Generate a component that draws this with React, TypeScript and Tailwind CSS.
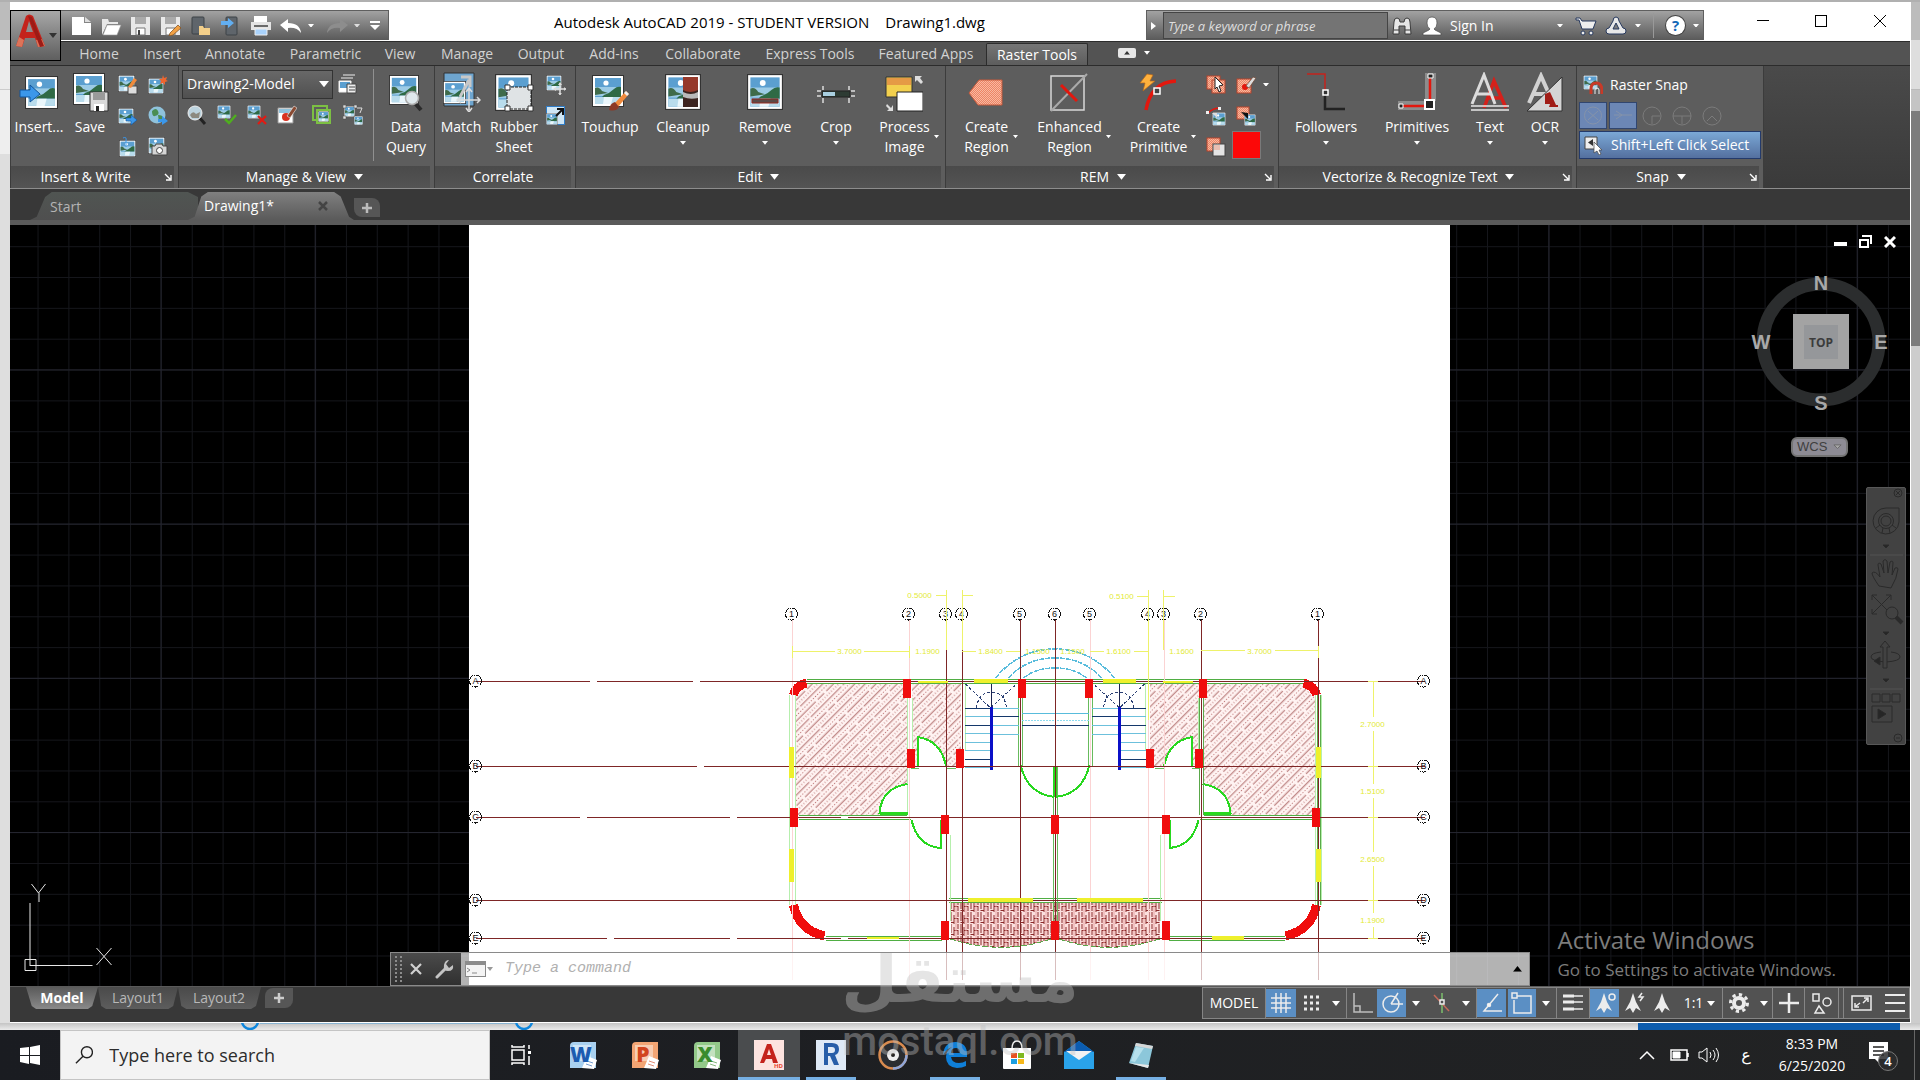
import type { ReactNode } from 'react'

/* ---------- shared bits ---------- */

function Caret({ className = 'w-2 fill-white' }: { className?: string }) {
  return (
    <svg viewBox="0 0 8 5" className={`shrink-0 ${className}`}>
      <path d="M0 0h8L4 5z" />
    </svg>
  )
}

function Photo({ x = 0, y = 0, s = 32 }: { x?: number; y?: number; s?: number }) {
  return (
    <g transform={`translate(${x} ${y}) scale(${s / 32})`}>
      <rect x="0.5" y="0.5" width="31" height="31" fill="#fff" stroke="#333" />
      <rect x="3" y="3" width="26" height="26" fill="#5b9fd0" />
      <path d="M3 12h26v9H3z" fill="#9ccbe6" />
      <path d="M3 13q4-2 7 3l6 2-13 2z" fill="#3f6b4a" />
      <path d="M12 20q6-2 10-6 3-3 7-2v10H10z" fill="#2f6a45" />
      <path d="M3 22h26v7H3z" fill="#b9dcec" />
      <path d="M12 22h9l-2 7h-8z" fill="#eaf6fb" />
      <circle cx="14" cy="8" r="2.6" fill="#fff" />
    </g>
  )
}

function Big({ children }: { children: ReactNode }) {
  return (
    <svg viewBox="0 0 40 40" className="size-10">
      {children}
    </svg>
  )
}

function Small({ children }: { children: ReactNode }) {
  return (
    <svg viewBox="0 0 20 20" className="size-5">
      {children}
    </svg>
  )
}

type ToolProps = {
  icon: ReactNode
  lines: string[]
  width: string
  menu?: boolean
}

function Tool({ icon, lines, width, menu }: ToolProps) {
  const side = menu && lines.length > 1
  return (
    <button className={`flex shrink-0 flex-col items-center pt-[3px] ${width}`}>
      {icon}
      <span className="mt-[5px] flex items-center justify-center gap-1 text-sm leading-5">
        {side && <span className="w-2" />}
        <span>
          {lines.map((line) => (
            <span key={line} className="block whitespace-nowrap">
              {line}
            </span>
          ))}
        </span>
        {side && <Caret className="w-[5px] fill-white" />}
      </span>
      {menu && !side && <Caret className="mt-1 w-[6px] fill-white" />}
    </button>
  )
}

function IconButton({ label, children, width = 'w-[30px]' }: { label: string; children: ReactNode; width?: string }) {
  return (
    <button aria-label={label} className={`flex h-[31px] shrink-0 items-center justify-center ${width}`}>
      {children}
    </button>
  )
}

type PanelProps = {
  title: string
  width: string
  menu?: boolean
  launcher?: boolean
  children: ReactNode
}

function Panel({ title, width, menu, launcher, children }: PanelProps) {
  return (
    <section className={`flex shrink-0 flex-col border-r border-[#3c3c3c] bg-[#5d5d5d] ${width}`}>
      <div className="flex flex-1 items-start pt-[3px]">{children}</div>
      <div className="mr-1 flex h-[22px] items-center bg-linear-to-b from-[#4a4a4a] to-[#545454]">
        <h2 className="flex flex-1 items-center justify-center gap-2 text-sm leading-5">
          {title}
          {menu && <Caret className="w-[9px] fill-white" />}
        </h2>
        {launcher && (
          <button aria-label={`${title} settings`} className="w-[14px]">
            <svg viewBox="0 0 8 8" className="ml-1 size-2 fill-none stroke-white" strokeWidth="1.4">
              <path d="M1 1l5 5M7 2v5H2" />
            </svg>
          </button>
        )}
      </div>
    </section>
  )
}

/* ---------- title bar ---------- */

const menus = [
  { name: 'Home', width: 'w-[64px]' },
  { name: 'Insert', width: 'w-[62px]' },
  { name: 'Annotate', width: 'w-[84px]' },
  { name: 'Parametric', width: 'w-[97px]' },
  { name: 'View', width: 'w-[52px]' },
  { name: 'Manage', width: 'w-[82px]' },
  { name: 'Output', width: 'w-[66px]' },
  { name: 'Add-ins', width: 'w-[80px]' },
  { name: 'Collaborate', width: 'w-[98px]' },
  { name: 'Express Tools', width: 'w-[116px]' },
  { name: 'Featured Apps', width: 'w-[116px]' },
]

function QuickAccess() {
  return (
    <div className="flex h-[30px] w-[328px] shrink-0 items-center border-t border-r border-[#5f5f5f] bg-linear-to-b from-[#a2a2a2] to-[#5a5a5a] pl-[9px]">
      <button aria-label="New" className="w-[30px]">
        <svg viewBox="0 0 22 20" className="h-5 fill-white">
          <path d="M2 1h12v6h7v12H2z" />
          <path d="M15 1l6 5h-6z" fill="#ddd" />
        </svg>
      </button>
      <button aria-label="Open" className="w-[30px]">
        <svg viewBox="0 0 22 20" className="h-5 fill-[#e8e8e8]">
          <path d="M2 19V3h6l1 3h9v2H7z" />
          <path d="M7 9h14l-4 10H3z" fill="#fff" stroke="#999" strokeWidth="0.6" />
        </svg>
      </button>
      <button aria-label="Save" className="w-[30px]">
        <svg viewBox="0 0 22 20" className="h-5">
          <path d="M1 1h19v18H1z" fill="#e9e9e9" />
          <path d="M5 1h11v7H5z" fill="#aaa" />
          <path d="M6 12h9v7H6z" fill="#fff" stroke="#777" />
          <path d="M8 14h2v5H8z" fill="#444" />
        </svg>
      </button>
      <button aria-label="Save as" className="w-[30px]">
        <svg viewBox="0 0 22 20" className="h-5">
          <path d="M1 1h19v18H1z" fill="#e9e9e9" />
          <path d="M5 1h11v7H5z" fill="#aaa" />
          <path d="M6 12h9v7H6z" fill="#fff" stroke="#777" />
          <path d="M10 17l8-8 3 3-8 7-4 1z" fill="#f0a044" stroke="#7a4a1c" strokeWidth="0.7" />
        </svg>
      </button>
      <button aria-label="Open from mobile" className="w-[30px]">
        <svg viewBox="0 0 22 20" className="h-5">
          <rect x="2" y="1" width="12" height="17" rx="1" fill="#5f656b" stroke="#3d4247" />
          <path d="M9 19v-9h4l1 2h6v7z" fill="#f3cf8a" />
        </svg>
      </button>
      <button aria-label="Save to mobile" className="w-[30px]">
        <svg viewBox="0 0 22 20" className="h-5">
          <rect x="6" y="1" width="11" height="18" rx="1" fill="#5f656b" stroke="#3d4247" />
          <path d="M1 5h7V2l6 5-6 5V9H1z" fill="#62aef0" />
        </svg>
      </button>
      <button aria-label="Plot" className="w-[30px]">
        <svg viewBox="0 0 22 20" className="h-5">
          <path d="M4 0h13v6H4z" fill="#fff" />
          <path d="M1 6h20v8H1z" fill="#e4e4e4" />
          <path d="M4 9h14v2H4z" fill="#6a6a6a" />
          <path d="M5 13h12v6H5z" fill="#a9d2fb" stroke="#eee" />
        </svg>
      </button>
      <button aria-label="Undo" className="w-[28px]">
        <svg viewBox="0 0 22 16" className="h-4 fill-white">
          <path d="M0 7l8-6v4q12 0 13 10-4-6-13-5v4z" />
        </svg>
      </button>
      <button aria-label="Undo list" className="w-[18px]">
        <Caret className="w-[6px] fill-white" />
      </button>
      <button aria-label="Redo" className="w-[28px]">
        <svg viewBox="0 0 22 16" className="h-4 fill-[#8d8d8d]">
          <path d="M22 7l-8-6v4Q2 5 1 15q4-6 13-5v4z" />
        </svg>
      </button>
      <button aria-label="Redo list" className="w-[16px]">
        <Caret className="w-[6px] fill-[#ddd]" />
      </button>
      <button aria-label="Customize">
        <svg viewBox="0 0 10 10" className="w-[10px] fill-white">
          <path d="M0 0h10v2H0zM0 4h10l-5 5z" />
        </svg>
      </button>
    </div>
  )
}

function TitleBar() {
  return (
    <header className="relative flex h-[39px] shrink-0 items-start bg-white pt-2">
      <button
        aria-label="Application menu"
        className="z-10 flex h-[51px] w-[51px] shrink-0 items-center border border-black bg-linear-to-b from-[#a8a8a8] to-[#5f5f5f] pl-1"
      >
        <svg viewBox="0 0 44 46" className="w-11">
          <path d="M1 33L11 3q3-3 7 0l12 30-7 1-3-9H10l-3 9z" fill="#c4231c" />
          <path d="M11 19h7l-4-11z" fill="#8f8f8f" />
          <path d="M1 33l3-9 5 3-2 7zM23 34l-2-7 6-1 3 7z" fill="#dd7358" />
          <path d="M13 3l4 1 12 29-4 1z" fill="#9c1b16" />
          <path d="M34 20h8l-4 5z" fill="#333" />
        </svg>
      </button>
      <QuickAccess />
      <p className="ml-[165px] flex gap-4 text-[15px] leading-6 whitespace-pre text-black">
        <span>Autodesk AutoCAD 2019 - STUDENT VERSION</span>
        <span>Drawing1.dwg</span>
      </p>
      <div className="ml-auto flex h-[30px] w-[558px] shrink-0 items-center border border-b-0 border-[#5f5f5f] bg-linear-to-b from-[#a2a2a2] to-[#5a5a5a] text-sm">
        <button aria-label="Collapse search" className="w-4 pl-1">
          <svg viewBox="0 0 5 8" className="h-2 fill-white">
            <path d="M0 0l5 4-5 4z" />
          </svg>
        </button>
        <input
          aria-label="Search help"
          placeholder="Type a keyword or phrase"
          className="h-[27px] w-[225px] border border-[#444] bg-[#747474] px-1 text-[13px] italic placeholder:text-[#dedede]"
        />
        <button aria-label="Search" className="ml-1 w-[30px]">
          <svg viewBox="0 0 20 20" className="size-5 fill-[#e6e6e6] stroke-[#3b3b3b]">
            <path d="M2 6q0-4 3-4t3 4h4q0-4 3-4t3 4l1 12h-6V10H7v8H1z" />
            <path d="M2 14h5M13 14h5" />
          </svg>
        </button>
        <button className="flex items-center gap-2">
          <svg viewBox="0 0 20 20" className="size-5 fill-white stroke-[#4a4a4a]" strokeWidth="0.7">
            <path d="M10 1q5 0 5 6 0 4-3 6l1 1 6 3v2H1v-2l6-3 1-1q-3-2-3-6 0-6 5-6z" />
          </svg>
          <span className="text-white">Sign In</span>
        </button>
        <Caret className="ml-auto w-[6px] fill-white" />
        <button aria-label="Store" className="ml-3">
          <svg viewBox="0 0 22 20" className="h-5 fill-[#eee] stroke-[#27395e]">
            <path d="M1 2h4l2 3h14l-3 8H7L4 4H1z" />
            <circle cx="8" cy="17" r="2" />
            <circle cx="16" cy="17" r="2" />
          </svg>
        </button>
        <button aria-label="Apps" className="ml-2 flex items-center gap-2">
          <svg viewBox="0 0 22 20" className="h-5 fill-[#e8e8e8] stroke-[#27395e]">
            <path d="M11 1q3 0 3 4l4 7q3 0 3 3t-3 3H4q-3 0-3-3t3-3l4-7q0-4 3-4z" />
            <path d="M11 7l3 6H8z" fill="#7c7c7c" />
          </svg>
          <Caret className="w-[6px] fill-white" />
        </button>
        <span className="mx-3 h-[25px] w-px bg-[#999]" />
        <button aria-label="Help" className="flex items-center gap-2 pr-1">
          <span className="flex size-[19px] items-center justify-center rounded-full bg-white text-[15px] font-bold text-[#1467b8] ring-1 ring-[#444]">
            ?
          </span>
          <Caret className="w-[6px] fill-white" />
        </button>
      </div>
      <div className="flex h-[22px] w-[206px] shrink-0 items-center pl-[53px]">
        <button aria-label="Minimize" className="w-[58px]">
          <svg viewBox="0 0 12 12" className="size-3 stroke-black">
            <path d="M0 5.5h12" />
          </svg>
        </button>
        <button aria-label="Maximize" className="w-[59px]">
          <svg viewBox="0 0 12 12" className="size-3 fill-none stroke-black">
            <rect x="0.5" y="0.5" width="11" height="11" />
          </svg>
        </button>
        <button aria-label="Close">
          <svg viewBox="0 0 12 12" className="size-3 stroke-black">
            <path d="M0 0l12 12M12 0L0 12" />
          </svg>
        </button>
      </div>
    </header>
  )
}

function MenuTabs() {
  return (
    <nav className="flex h-[25px] shrink-0 items-end border-t border-b border-[#2c2c2c] bg-[#535353] pl-[57px] text-sm text-[#d2d2d2]">
      {menus.map((menu) => (
        <a key={menu.name} href="#" className={`shrink-0 text-center leading-[22px] whitespace-nowrap ${menu.width}`}>
          {menu.name}
        </a>
      ))}
      <a
        href="#"
        className="ml-[2px] h-[22px] w-[102px] shrink-0 rounded-t-xs border border-b-0 border-[#2c2c2c] bg-linear-to-b from-[#757575] to-[#5d5d5d] text-center leading-[21px] text-white"
      >
        Raster Tools
      </a>
      <button aria-label="Minimize ribbon" className="mb-[7px] ml-[30px] flex h-[10px] w-[18px] items-center justify-center rounded-xs bg-[#e6e6e6]">
        <Caret className="w-[6px] rotate-180 fill-[#333]" />
      </button>
      <button aria-label="Ribbon options" className="mb-[10px] ml-2">
        <Caret className="w-[6px] fill-white" />
      </button>
    </nav>
  )
}

/* ---------- ribbon ---------- */

function RegionPatch({ x = 0, y = 0, s = 13 }: { x?: number; y?: number; s?: number }) {
  return <rect x={x} y={y} width={s} height={s} fill="url(#rose)" stroke="#b7452c" />
}

function Ribbon() {
  return (
    <div className="flex h-[123px] shrink-0 border-b border-[#8d8d8d] bg-linear-to-b from-[#4a4a4a] to-[#3a3a3a] pl-px text-white">
      <svg className="absolute size-0">
        <defs>
          <pattern id="rose" width="2" height="2" patternUnits="userSpaceOnUse">
            <path d="M0 0h2v2H0z" fill="#f7b9a2" />
            <path d="M0 0h1v1H0zM1 1h1v1H1z" fill="#ee8464" />
          </pattern>
        </defs>
      </svg>

      <Panel title="Insert & Write" width="w-[168px]" launcher>
        <Tool
          width="w-[56px]"
          lines={['Insert...']}
          icon={
            <Big>
              <Photo x={6} y={4} s={33} />
              <path d="M1 18h10v-5l10 9-10 8v-5H1z" fill="#3b97ea" stroke="#12549a" />
            </Big>
          }
        />
        <Tool
          width="w-[46px]"
          lines={['Save']}
          icon={
            <Big>
              <Photo x={3} y={1} s={32} />
              <path d="M20 20h18v19H20z" fill="#d9d9d9" stroke="#333" />
              <path d="M23 20h12v8H23z" fill="#9a9a9a" />
              <path d="M24 32h10v7H24z" fill="#fff" />
              <path d="M26 34h3v5h-3z" fill="#222" />
            </Big>
          }
        />
        <div className="flex">
          <div>
            <IconButton label="Save as image">
              <Small>
                <Photo s={17} />
                <path d="M10 11h9v8h-9z" fill="#ddd" stroke="#444" />
                <path d="M10 12l6-9 3 2-6 8z" fill="#f08a3c" />
              </Small>
            </IconButton>
            <IconButton label="Export image">
              <Small>
                <Photo y={2} s={16} />
                <path d="M8 12h5V9l6 5-6 5v-4H8z" fill="#3b97ea" stroke="#12549a" strokeWidth="0.6" />
              </Small>
            </IconButton>
            <IconButton label="Attach">
              <Small>
                <Photo x={1} y={3} s={17} />
                <path d="M5 1q4-2 3 3v6" fill="none" stroke="#3b97ea" />
              </Small>
            </IconButton>
          </div>
          <div>
            <IconButton label="New image">
              <Small>
                <Photo y={3} s={16} />
                <path d="M15 0l1 3 3-1-1 3 2 1-3 1 0 3-2-2-3 1 1-3-2-2 3 0z" fill="#f0662e" />
              </Small>
            </IconButton>
            <IconButton label="Web image">
              <Small>
                <circle cx="9" cy="9" r="8.5" fill="#8fc2dc" />
                <path d="M4 5q4-4 6 0t-3 5q-3 1-3-5zM10 9q5 0 5 3t-4 4z" fill="#4a8d53" />
                <path d="M10 13h4v-3l6 5-6 4v-3h-4z" fill="#3b97ea" />
              </Small>
            </IconButton>
            <IconButton label="Capture image">
              <Small>
                <Photo s={17} />
                <path d="M4 9h3l1-2h6l1 2h4v9H4z" fill="#d5d5d5" stroke="#444" />
                <circle cx="11.5" cy="13.5" r="3" fill="#fff" stroke="#444" />
              </Small>
            </IconButton>
          </div>
        </div>
      </Panel>

      <Panel title="Manage & View" width="w-[256px]" menu>
        <div className="ml-[3px]">
          <div className="flex h-[30px] items-center">
            <div className="relative h-[29px] w-[151px]">
              <select
                aria-label="Raster image"
                className="h-full w-full appearance-none border border-[#333] bg-linear-to-b from-[#686868] to-[#505050] px-1 text-sm"
              >
                <option>Drawing2-Model</option>
              </select>
              <span className="pointer-events-none absolute inset-y-0 right-1 flex items-center">
                <Caret className="w-[10px] fill-white" />
              </span>
            </div>
            <IconButton label="Image manager">
              <Small>
                <path d="M5 1h12M3 4h12M1 7h12v11H1z" fill="#fff" stroke="#eee" />
                <path d="M2 8h10v6H2z" fill="#5b9fd0" />
                <path d="M9 10h9v9H9z" fill="#eee" stroke="#444" />
                <path d="M11 13h6M11 16h6" stroke="#444" />
              </Small>
            </IconButton>
          </div>
          <div className="flex">
            <IconButton label="Zoom image">
              <Small>
                <path d="M12 12l6 7" stroke="#222" strokeWidth="3" />
                <circle cx="8" cy="8" r="7" fill="#bcd3de" stroke="#eee" />
                <path d="M3 10q3-5 6-1l4-2-1 6H5z" fill="#8c8a80" />
              </Small>
            </IconButton>
            <IconButton label="Show image">
              <Small>
                <Photo s={14} />
                <path d="M8 14l4 4 7-8" fill="none" stroke="#4fae1f" strokeWidth="2.5" />
              </Small>
            </IconButton>
            <IconButton label="Remove image">
              <Small>
                <Photo s={14} />
                <path d="M11 11l8 8M19 11l-8 8" stroke="#e21a12" strokeWidth="2.2" />
              </Small>
            </IconButton>
            <IconButton label="Image colour">
              <Small>
                <path d="M1 3h15v15H1z" fill="#fff" stroke="#999" />
                <path d="M2 4h13v4H2z" fill="#8fc2dc" />
                <circle cx="9" cy="12" r="4" fill="#d93221" />
                <path d="M10 11l7-10 3 2-7 10z" fill="#8a4a32" stroke="#eee" strokeWidth="0.6" />
              </Small>
            </IconButton>
            <IconButton label="Image frame" width="w-[40px]">
              <Small>
                <path d="M1 1h14v14H1z" fill="none" stroke="#7cc043" strokeWidth="2" />
                <path d="M4 4h15v15H4z" fill="#7cc043" />
                <Photo x={6} y={6} s={11} />
              </Small>
            </IconButton>
            <IconButton label="Transform" width="w-[22px]">
              <Small>
                <Photo x={1} y={1} s={11} />
                <path d="M0 0h3v3H0zM11 0h3v3h-3zM0 11h3v3H0zM11 11h3v3h-3z" fill="#ddd" stroke="#444" strokeWidth="0.5" />
                <Photo x={11} y={11} s={9} />
                <path d="M14 3l5 0-2 5" fill="none" stroke="#ddd" />
              </Small>
            </IconButton>
          </div>
        </div>
        <span className="ml-[9px] h-[92px] w-px bg-[#909090]" />
        <Tool
          width="ml-1 w-[56px]"
          lines={['Data', 'Query']}
          icon={
            <Big>
              <Photo x={3} y={3} s={30} />
              <path d="M28 30l7 8" stroke="#2a2a2a" strokeWidth="4" />
              <circle cx="26" cy="26" r="6.5" fill="#dfe8ec" stroke="#aaa" strokeWidth="1.5" />
            </Big>
          }
        />
      </Panel>

      <Panel title="Correlate" width="w-[141px]">
        <Tool
          width="w-[52px]"
          lines={['Match']}
          icon={
            <Big>
              <path d="M3 1h30v33H3z" fill="#6ea5cf" stroke="#333" />
              <Photo x={2} y={9} s={23} />
              <path d="M19 25L28 8m-8-3h9v10" fill="none" stroke="#c8c8c8" strokeWidth="3" />
              <path d="M28 17v21M18 28h20M25 20l3-4 3 4M25 36l3 4 3-4M20 25l-4 3 4 3M36 25l3 3-3 3" fill="none" stroke="#ddd" strokeWidth="1.5" />
            </Big>
          }
        />
        <Tool
          width="w-[54px]"
          lines={['Rubber', 'Sheet']}
          icon={
            <Big>
              <Photo x={1} y={2} s={37} />
              <path d="M13 15h24v22H13z" fill="#dfe3e5" stroke="#222" strokeDasharray="3 1" />
              <path d="M11 13h5v5h-5zM34 13h5v5h-5zM11 34h5v5h-5zM34 34h5v5h-5z" fill="#fff" stroke="#333" />
            </Big>
          }
        />
        <div>
          <IconButton label="Displace">
            <Small>
              <Photo s={16} />
              <path d="M14 8v12M8 14h12" stroke="#ddd" strokeWidth="1.5" />
              <path d="M12 10l2-3 2 3M12 18l2 2 2-2M10 12l-3 2 3 2M18 12l2 2-2 2" fill="#ddd" />
            </Small>
          </IconButton>
          <IconButton label="Scale">
            <Small>
              <rect x="0.5" y="0.5" width="18" height="18" fill="#cfe6f5" stroke="#2f7cc7" />
              <Photo x={0} y={7} s={12} />
              <path d="M10 10l6-6m-5-1h6v6" fill="none" stroke="#111" strokeWidth="2" />
            </Small>
          </IconButton>
        </div>
      </Panel>

      <Panel title="Edit" width="w-[370px]" menu>
        <Tool
          width="w-[68px]"
          lines={['Touchup']}
          icon={
            <Big>
              <Photo x={2} y={3} s={32} />
              <path d="M24 32l12-13 3 3-11 13z" fill="#f08a3c" />
              <path d="M34 21l2-2 3 3-2 2z" fill="#eee" />
              <path d="M19 38q1-7 6-8l4 5q-3 5-10 3z" fill="#8c3a26" />
            </Big>
          }
        />
        <Tool
          width="w-[78px]"
          lines={['Cleanup']}
          menu
          icon={
            <Big>
              <Photo x={2} y={2} s={36} />
              <path d="M20 5h15v30H20z" fill="#3c2420" />
              <path d="M20 5h15v13q-8 4-15 0z" fill="#96392b" />
              <path d="M20 20q8 4 15 0v6q-8 2-15-1z" fill="#b9b9b9" />
            </Big>
          }
        />
        <Tool
          width="w-[86px]"
          lines={['Remove']}
          menu
          icon={
            <Big>
              <Photo x={2} y={2} s={36} />
              <path d="M7 27h26v4H7z" fill="#5a4a48" stroke="#96291f" />
            </Big>
          }
        />
        <Tool
          width="w-[56px]"
          lines={['Crop']}
          menu
          icon={
            <Big>
              <path d="M6 19h28v6H6z" fill="#2d3b33" stroke="#222" />
              <path d="M7 20h12v4H7z" fill="#a9cfe0" />
              <path d="M7 14v4M33 14v4M7 26v5M33 26v5M1 19h4M1 24h4M35 19h4M35 24h4" stroke="#ddd" strokeWidth="1.5" />
            </Big>
          }
        />
        <Tool
          width="w-[78px]"
          lines={['Process', 'Image']}
          menu
          icon={
            <Big>
              <path d="M3 5h26v20H3z" fill="#f3d04e" stroke="#333" />
              <path d="M4 6h24v7H4z" fill="#e59a45" />
              <path d="M14 20h26v19H14z" fill="#fff" stroke="#222" />
              <path d="M32 4h7l-2 2 3 4-2 2-4-4-2 2zM4 32l4 4 2-3v6H4l2-2-3-3z" fill="#ddd" />
            </Big>
          }
        />
      </Panel>

      <Panel title="REM" width="w-[333px]" menu launcher>
        <Tool
          width="w-[78px]"
          lines={['Create', 'Region']}
          menu
          icon={
            <Big>
              <path d="M4 21L14 8h23v25H13z" fill="url(#rose)" stroke="#c65a3c" />
            </Big>
          }
        />
        <Tool
          width="w-[88px]"
          lines={['Enhanced', 'Region']}
          menu
          icon={
            <Big>
              <path d="M3 4h33v34H3z" fill="none" stroke="#d8d8d8" strokeWidth="1.5" />
              <path d="M3 39L39 2" stroke="#aaa" strokeWidth="2" />
              <path d="M13 13l16 16" stroke="#e3170d" strokeWidth="3" />
            </Big>
          }
        />
        <Tool
          width="w-[90px]"
          lines={['Create', 'Primitive']}
          menu
          icon={
            <Big>
              <path d="M9 38Q14 10 39 9" fill="none" stroke="#e3170d" strokeWidth="3.5" />
              <path d="M10 2L3 11h5l-2 8 12-10h-5l3-6z" fill="#ffb13d" stroke="#b5651a" strokeWidth="0.7" />
              <path d="M17 16h6v6h-6z" fill="#444" stroke="#fff" strokeWidth="1.5" />
            </Big>
          }
        />
        <div className="w-[28px]">
          <IconButton label="Select region" width="w-[28px]">
            <Small>
              <RegionPatch x={1} y={1} />
              <RegionPatch x={6} y={5} />
              <path d="M9 2l8 8-4 1 2 5-2 1-2-5-2 2z" fill="#fff" stroke="#222" />
            </Small>
          </IconButton>
          <IconButton label="Primitive to raster" width="w-[28px]">
            <Small>
              <path d="M2 7q5-5 12-5" fill="none" stroke="#e3170d" strokeWidth="1.5" />
              <path d="M0 5h3v3H0zM12 1h3v3h-3z" fill="#eee" />
              <Photo x={6} y={6} s={14} />
              <path d="M6 7l5 5v-5z" fill="#ddd" />
            </Small>
          </IconButton>
          <IconButton label="Copy region" width="w-[28px]">
            <Small>
              <RegionPatch x={1} y={1} />
              <rect x="7" y="7" width="12" height="12" fill="#e4e4e4" stroke="#444" />
              <path d="M8 8h6v5H8z" fill="#e8bfb2" />
            </Small>
          </IconButton>
        </div>
        <div className="w-[32px]">
          <IconButton label="Paint region" width="w-[32px]">
            <Small>
              <RegionPatch x={1} y={4} s={14} />
              <circle cx="9" cy="12" r="3" fill="#e3170d" />
              <path d="M10 11l7-9 3 1-7 10z" fill="#ddd" stroke="#6e4632" strokeWidth="0.7" />
            </Small>
          </IconButton>
          <IconButton label="Region to raster" width="w-[32px]">
            <Small>
              <RegionPatch x={1} y={1} s={12} />
              <Photo x={8} y={8} s={12} />
              <path d="M5 6l7 7V7zM7 12l6-1" fill="#111" />
            </Small>
          </IconButton>
          <button aria-label="REM colour" className="ml-[2px] h-[28px] w-[29px] border border-[#7a7a7a] bg-[#fc0808]" />
        </div>
        <div className="flex h-[31px] items-center">
          <Caret className="ml-px w-[6px] fill-white" />
        </div>
      </Panel>

      <Panel title="Vectorize & Recognize Text" width="w-[298px]" menu launcher>
        <Tool
          width="w-[94px]"
          lines={['Followers']}
          menu
          icon={
            <Big>
              <path d="M1 2h18v17" fill="none" stroke="#c4231c" strokeWidth="1.5" />
              <path d="M19 20v17h20" fill="none" stroke="#222" strokeWidth="2.5" />
              <path d="M17 18h5v5h-5z" fill="#333" stroke="#fff" strokeWidth="1.5" />
            </Big>
          }
        />
        <Tool
          width="w-[88px]"
          lines={['Primitives']}
          menu
          icon={
            <Big>
              <path d="M28 1h11v28H28zM1 29h28v9H1z" fill="#8c8c8c" />
              <path d="M33 4v26M4 34h26" stroke="#e3170d" strokeWidth="2.5" />
              <path d="M31 2h5v4h-5zM2 32h4v4H2z" fill="#222" stroke="#fff" />
              <path d="M28 28h9v9h-9z" fill="#222" stroke="#fff" strokeWidth="2" />
            </Big>
          }
        />
        <Tool
          width="w-[58px]"
          lines={['Text']}
          menu
          icon={
            <Big>
              <path d="M14 36L24 9l12 27M19 26h13" fill="none" stroke="#d6201a" strokeWidth="3.5" />
              <path d="M2 32L14 3l11 29M6 22h15" fill="none" stroke="#dcdcdc" strokeWidth="3" />
              <path d="M1 34h38M1 38h38" stroke="#e8e8e8" strokeWidth="1.5" />
            </Big>
          }
        />
        <Tool
          width="w-[52px]"
          lines={['OCR']}
          menu
          icon={
            <Big>
              <path d="M4 31L16 4l12 27M9 22h13" fill="none" stroke="#d2d2d2" strokeWidth="4" />
              <path d="M2 39L37 5v34z" fill="#d4d4d4" stroke="#333" />
              <path d="M20 22l5-2 6 13h2v2h-9l1-3h-5z" fill="#a01c16" />
            </Big>
          }
        />
      </Panel>

      <Panel title="Snap" width="w-[187px]" menu launcher>
        <div className="ml-[2px] flex w-[182px] flex-col">
          <button className="flex h-[31px] items-center gap-[7px] pl-1 text-sm">
            <Small>
              <Photo s={15} />
              <path d="M8 19v-5q0-6 5-6t6 6v5" fill="none" stroke="#c83a28" strokeWidth="3" />
              <path d="M12 19v-4q0-2 2-2t2 2v4" fill="none" stroke="#eee" />
            </Small>
            Raster Snap
          </button>
          <div className="flex h-[31px] items-center">
            <button aria-label="Snap center" className="mr-[2px] h-[27px] w-[28px] border border-[#31466f] bg-[#6c87b5]">
              <svg viewBox="0 0 26 25" className="fill-none stroke-[#8593aa]">
                <circle cx="13" cy="12.5" r="8.5" />
                <path d="M8 8l10 9M18 8l-10 9" />
              </svg>
            </button>
            <button aria-label="Snap edge" className="h-[27px] w-[28px] border border-[#31466f] bg-[#6c87b5]">
              <svg viewBox="0 0 26 25" className="fill-none stroke-[#8593aa]">
                <path d="M4 12h18M6 8l6 4-6 4" />
              </svg>
            </button>
            {['M10 10v8M10 10h8', 'M1 10h18M10 10v8', 'M5 15l5-5 5 5'].map((d) => (
              <button key={d} aria-label="Snap mode" className="flex w-[30px] justify-center">
                <svg viewBox="0 0 20 20" className="size-5 fill-none stroke-[#7b7b7b]">
                  <circle cx="10" cy="10" r="9" />
                  <path d={d} />
                </svg>
              </button>
            ))}
          </div>
          <button className="flex h-[28px] items-center gap-[7px] border border-[#233a6b] bg-linear-to-b from-[#7ba8d6] to-[#54709f] pl-1 text-sm whitespace-nowrap">
            <Small>
              <path d="M1 2h12v12H1z" fill="#eee" stroke="#444" />
              <path d="M9 4v7L4 7.5z" fill="#333" />
              <path d="M10 7l8 8-3 0 2 4-2 1-2-4-3 2z" fill="#fff" stroke="#444" strokeWidth="0.7" />
            </Small>
            Shift+Left Click Select
          </button>
        </div>
      </Panel>
    </div>
  )
}

/* ---------- document tabs ---------- */

function DocumentTabs() {
  return (
    <div className="flex h-[36px] shrink-0 items-end border-b-[5px] border-[#5a5a5a] bg-[#383838] pl-[20px] text-sm">
      <a
        href="#"
        className="h-[28px] w-[168px] bg-linear-to-b from-[#505552] to-[#4f4f4f] pl-[20px] leading-[30px] text-[#b4b4b4] [clip-path:polygon(0_100%,4%_88%,9%_18%,13%_0,94%_0,100%_18%,100%_100%)]"
      >
        Start
      </a>
      <div className="-ml-[10px] flex h-[28px] w-[166px] items-center bg-linear-to-b from-[#808080] to-[#5a5a5a] pl-[16px] leading-[30px] text-white [clip-path:polygon(0_100%,4%_88%,8%_16%,12%_0,88%_0,92%_16%,97%_88%,100%_100%)]">
        <a href="#" className="w-[114px]">
          Drawing1*
        </a>
        <button aria-label="Close drawing">
          <svg viewBox="0 0 10 10" className="size-[10px] stroke-[#444]" strokeWidth="2.5">
            <path d="M1 1l8 8M9 1L1 9" />
          </svg>
        </button>
      </div>
      <button
        aria-label="New drawing"
        className="mb-[3px] flex h-[19px] w-[26px] items-center justify-center rounded-tr-lg rounded-bl-lg bg-[#565656]"
      >
        <svg viewBox="0 0 10 10" className="size-[10px] stroke-[#bbb]" strokeWidth="2.5">
          <path d="M5 0v10M0 5h10" />
        </svg>
      </button>
    </div>
  )
}

/* ---------- drawing ---------- */

const maroon = '#7e2626'
const rose = '#fbd3d3'
const axesX = [
  { x: 792, color: rose, tag: '1' },
  { x: 909, color: rose, tag: '2' },
  { x: 946, color: maroon, tag: '3' },
  { x: 962, color: maroon, tag: '4' },
  { x: 1020, color: maroon, tag: '5' },
  { x: 1055, color: maroon, tag: '6' },
  { x: 1090, color: rose, tag: '5' },
  { x: 1148, color: rose, tag: '4' },
  { x: 1164, color: rose, tag: '3' },
  { x: 1201, color: maroon, tag: '2' },
  { x: 1318, color: maroon, tag: '1' },
]
const axesY = [
  { y: 681, tag: 'A', gaps: [590, 693] },
  { y: 766, tag: 'B', gaps: [697] },
  { y: 817, tag: 'C', gaps: [580, 730, 841] },
  { y: 900, tag: 'D', gaps: [] },
  { y: 938, tag: 'E', gaps: [607, 730, 841] },
]
const dimsTop = [
  { x: 850, text: '3.7000' },
  { x: 928, text: '1.1900' },
  { x: 991, text: '1.8400' },
  { x: 1038, text: '1.1500' },
  { x: 1073, text: '1.1500' },
  { x: 1119, text: '1.6100' },
  { x: 1182, text: '1.1600' },
  { x: 1260, text: '3.7000' },
]
const dimsRight = [
  { y: 724, text: '2.7000' },
  { y: 791, text: '1.5100' },
  { y: 859, text: '2.6500' },
  { y: 920, text: '1.1900' },
]
const columns = [
  [903, 679], [1018, 679], [1085, 679], [1199, 679],
  [907, 749], [956, 749], [1146, 749], [1195, 749],
  [790, 808], [1312, 808],
  [941, 815], [1051, 815], [1162, 815],
  [941, 921], [1051, 921], [1162, 921],
]
const windows = [
  [974, 679, 34, 4], [1103, 679, 33, 4], [918, 681, 30, 2], [1163, 681, 30, 2],
  [789, 747, 5, 31], [789, 849, 5, 33], [1316, 747, 5, 31], [1316, 849, 5, 33],
  [968, 898, 65, 4], [1077, 898, 66, 4], [1212, 936, 32, 4], [867, 937, 32, 2],
]
const stepsLong = [708, 716, 725, 733, 742, 750, 759, 767]
const stepsShort = [708, 716, 725, 734]

function Bubble({ x, y, tag }: { x: number; y: number; tag: string }) {
  return (
    <g>
      <circle cx={x} cy={y} r="6" fill="none" stroke="#111" strokeDasharray="4 1 1 1" />
      <text x={x} y={y + 3} textAnchor="middle" fontSize="9" fill="#111">
        {tag}
      </text>
    </g>
  )
}

function HalfPlan({ hatch }: { hatch: string }) {
  // left half of the plan; the right half mirrors it round the centre axis
  return (
    <g fill="none">
      <path d="M795 684H907V784Q882 790 880 815H795z" fill={hatch} />
      <path d="M912 684H961V766H946Q944 742 918 737V766H912z" fill={hatch} />
      <path d="M951 903h104v35q-52 18-104 1z" fill="url(#brick)" />
      <path d="M807 679.5h248M807 683.5h248M799 815.5h108M799 819.5h112M949 898.5h106M949 902.5h106M826 936.5h116M826 940.5h116" stroke="#4fae43" />
      <path d="M789.5 695v210M795.5 695v210M907.5 698v117M912.5 698v52M962.5 684v66M965.5 684v66M950.5 835v86" stroke="#b6efad" />
      <path d="M1018.5 698v68M1022.5 698v68M1053.5 766v174M946.5 835v86M911 768h8M946 768h10" stroke="#67bb5c" />
      <path d="M951 939q52 17 104-1" stroke="#5aa84a" strokeDasharray="6 2" />
      <path d="M918.5 766v-29q24 4 28 30M908 784q-26 4-28 29h28M912 820q6 26 29 28v-28M1021 765q7 29 34 32" stroke="#28d81f" strokeWidth="2" />
      <path d="M880 813h28" stroke="#28d81f" strokeWidth="3" />
      <path d="M996 678q24-29 59-29M1009 678q18-20 46-20M1024 678q12-10 31-10" stroke="#58bcdc" strokeDasharray="5 1" strokeWidth="1.5" />
      <path d="M966 684l25 24 26-24M977 708q2-16 15-16t15 16" stroke="#2a3f73" strokeDasharray="3 2" />
      <path d="M991.5 684v23" stroke="#1c2450" />
      {stepsLong.map((y, i) => (
        <path key={y} d={`M965 ${y + 0.5}h26`} stroke={i === 0 || i === 2 || i === 6 ? '#14386b' : '#6cc0dc'} />
      ))}
      {stepsShort.map((y, i) => (
        <path key={y} d={`M993 ${y + 0.5}h26`} stroke={i === 1 ? '#14386b' : '#6cc0dc'} />
      ))}
      <path d="M1022 713.5h33" stroke="#58bcdc" />
      <path d="M1022 720.5h33" stroke="#8fdcf0" strokeDasharray="2 1" />
      <path d="M1022 725.5h33" stroke="#14386b" />
      <path d="M991.5 707v63" stroke="#0b10c8" strokeWidth="3" />
      <path d="M794 695q2-9 13-12" stroke="#f00d0d" strokeWidth="9" />
      <path d="M794 905q5 25 31 31" stroke="#f00d0d" strokeWidth="9" />
    </g>
  )
}

function HatchLines() {
  return (
    <g shapeRendering="auto">
      <path d="M0 0h60v20H0z" fill="#fff3f2" />
      <path d="M0 1h26M29 1h31M8 11h40M52 11h16M0 11h4" stroke="#943c3c" />
      <path d="M0 6h60M0 16h60" stroke="#a85050" strokeDasharray="1.5 2.5" />
    </g>
  )
}

function Plan() {
  return (
    <svg
      viewBox="10 225 1901 761"
      preserveAspectRatio="xMidYMin slice"
      className="absolute inset-0 h-full w-full"
      shapeRendering="crispEdges"
      fontFamily="Liberation Sans, sans-serif"
    >
      <defs>
        <pattern id="minor" x="7.2" y="30.3" width="30.84" height="30.84" patternUnits="userSpaceOnUse">
          <path d="M0.5 0v31M0 0.5h31" stroke="#15161b" fill="none" />
        </pattern>
        <pattern id="major" x="161" y="61" width="154.2" height="154.2" patternUnits="userSpaceOnUse">
          <path d="M0.5 0v155M0 0.5h155" stroke="#24252f" fill="none" />
        </pattern>
        <pattern id="hatch" width="60" height="20" patternUnits="userSpaceOnUse" patternTransform="rotate(-45) scale(0.75)">
          <HatchLines />
        </pattern>
        <pattern id="hatch-flip" width="60" height="20" patternUnits="userSpaceOnUse" patternTransform="rotate(45) scale(0.75)">
          <HatchLines />
        </pattern>
        <pattern id="brick" width="10" height="12" patternUnits="userSpaceOnUse">
          <path d="M0 0h10v12H0z" fill="#fbe0de" />
          <path d="M1.5 0v9M4.5 3v9M8.5 0v5M8.5 7v4M4 6h5M1 10h3" stroke="#8b2a2a" fill="none" />
          <path d="M6.5 0v12" stroke="#e9a3a3" />
        </pattern>
      </defs>
      <rect x="10" y="225" width="1901" height="761" fill="#000" />
      <rect x="10" y="225" width="1901" height="761" fill="url(#minor)" />
      <rect x="10" y="225" width="1901" height="761" fill="url(#major)" />
      <rect x="469" y="225" width="981" height="761" fill="#fff" />

      <HalfPlan hatch="url(#hatch)" />
      <g transform="translate(2111 0) scale(-1 1)">
        <HalfPlan hatch="url(#hatch-flip)" />
      </g>
      <path d="M1317.5 695v210M1320.5 695v210M1199.5 698v117M1203.5 698v117" stroke="#5aa84a" />
      <path d="M1055.5 766v31" stroke="#28d81f" strokeWidth="4" />

      {axesX.map((axis) => (
        <g key={axis.x}>
          <path d={`M${axis.x + 0.5} 620V980`} stroke={axis.color} />
          <Bubble x={axis.x} y={614} tag={axis.tag} />
        </g>
      ))}
      {axesY.map((axis) => (
        <g key={axis.y}>
          <path d={`M476 ${axis.y + 0.5}H1425`} stroke={maroon} />
          {axis.gaps.map((x) => (
            <path key={x} d={`M${x} ${axis.y + 0.5}h7`} stroke="#fff" />
          ))}
          <Bubble x={476} y={axis.y} tag={axis.tag} />
          <Bubble x={1424} y={axis.y} tag={axis.tag} />
        </g>
      ))}

      {windows.map(([x, y, width, height]) => (
        <rect key={`${x}-${y}`} x={x} y={y} width={width} height={height} fill="#eef02c" />
      ))}
      {columns.map(([x, y]) => (
        <rect key={`${x}-${y}`} x={x} y={y} width="8" height="19" fill="#f00d0d" />
      ))}

      <g stroke="#eef26a">
        <path d="M792 651.5H835M864 651.5H909M1201 650.5H1245M1275 650.5H1318M962 651.5h14M1006 651.5h14M1090 651.5h14M1134 651.5h14" />
        <path d="M936 595.5h10M962 595.5h11M1137 596.5h11M1164 596.5h11M946.5 590v60M962.5 590v60M1148.5 590v130M1163.5 590v60M909.5 646v12M792.5 646v12M1318.5 646v12" />
        <path d="M1373.5 681v36M1373.5 731v53M1373.5 798v54M1373.5 866v47M1373.5 927v11M1368 681.5h10M1368 766.5h10M1368 817.5h10M1368 900.5h10M1368 938.5h10" />
      </g>
      <g fill="#e3ea35" fontSize="8" textAnchor="middle">
        <text x="920" y="598">0.5000</text>
        <text x="1122" y="599">0.5100</text>
        {dimsTop.map((dim) => (
          <text key={dim.x} x={dim.x} y="654">
            {dim.text}
          </text>
        ))}
        {dimsRight.map((dim) => (
          <text key={dim.y} x="1373" y={dim.y + 3}>
            {dim.text}
          </text>
        ))}
      </g>

      <g fill="none" stroke="#e8e8e8" shapeRendering="auto">
        <path d="M30.5 903v62M30 965.5h63M25.5 959.5h11v11h-11z" />
        <path d="M32 884l7 9 7-9M39.5 893v9M97 948l15 17M112 948l-15 17" />
      </g>
    </svg>
  )
}

function ViewCube() {
  return (
    <div className="absolute top-[46px] right-[14px] w-[150px]">
      <svg viewBox="-8 0 150 142" className="w-full" fontFamily="Liberation Sans, sans-serif">
        <circle cx="67" cy="71" r="58" fill="none" stroke="#2b2d2e" strokeWidth="13" />
        <rect x="39" y="43" width="56" height="55" fill="#a3a3a3" />
        <rect x="50" y="54" width="34" height="34" fill="#95979a" />
        <g fill="#a9a9a9" fontSize="20" fontWeight="700" textAnchor="middle">
          <text x="67" y="19">N</text>
          <text x="67" y="139">S</text>
          <text x="7" y="78">W</text>
          <text x="127" y="78">E</text>
        </g>
        <text x="67" y="76" fill="#3c3c3c" fontSize="12" fontWeight="700" textAnchor="middle" fontFamily="Open Sans, sans-serif">
          TOP
        </text>
      </svg>
      <button className="mt-6 ml-[45px] flex h-[20px] w-[57px] items-center justify-between rounded-md border-2 border-[#747474] bg-[#8d8b94] px-1 font-['Liberation_Sans',sans-serif] text-[13px] text-[#3f3f3f]">
        WCS
        <svg viewBox="0 0 10 6" className="w-[9px] fill-[#a8a8a8] stroke-[#666]">
          <path d="M1 1h8L5 5z" />
        </svg>
      </button>
    </div>
  )
}

function NavigationBar() {
  return (
    <div className="absolute top-[262px] right-1 w-[40px] rounded-xs border border-[#585858] bg-[#424242]">
      <svg viewBox="0 0 38 256" className="w-full fill-none stroke-[#2a2a2a]">
        <circle cx="31" cy="5" r="4" />
        <path d="M29 3l4 4M33 3l-4 4" />
        <path d="M19 20h13v14a13 13 0 1 1-13-14z" />
        <circle cx="19" cy="33" r="7.5" />
        <circle cx="19" cy="33" r="5" />
        <path d="M9 40l4-3M29 40l-4-3M15 45l1-5M23 45l-1-5" />
        <path d="M16 57h6l-3 3zM16 144h6l-3 3zM16 191h6l-3 3z" fill="#262626" />
        <path d="M3 67h33M3 201h33" stroke="#525252" />
        <path d="M12 98Q5 88 5 85q3-3 8 4L11 77q0-3 3-1l3 9-1-12q2-3 4 0l1 12 2-11q3-2 3 1l-1 12 3-7q3-1 3 1-1 9-7 19z" />
        <path d="M5 107l20 20M24 107L5 126M5 112v-5h5M19 107h5v5M5 121v5h5" />
        <circle cx="25" cy="125" r="6" fill="#424242" />
        <path d="M29 129l6 6" strokeWidth="4" />
        <path d="M14 164q-10 1-10 5t15 5q14-1 14-5t-9-5" />
        <path d="M16 180v-21h-3l5-6 5 6h-3v21z" fill="#424242" />
        <path d="M13 169l-6 4 6 4z" fill="#262626" />
        <path d="M5 206h8v8H5zM15 206h8v8h-8zM25 206h8v8h-8zM5 218h20v16H5z" />
        <path d="M11 221l8 5-8 5z" fill="#262626" />
        <circle cx="31" cy="250" r="4" />
        <path d="M29 250h4" />
      </svg>
    </div>
  )
}

function CommandLine() {
  return (
    <form className="absolute bottom-0 left-[380px] flex h-[34px] w-[1140px] max-w-full border border-[#8a8a8a]">
      <div className="flex w-[70px] items-center bg-linear-to-b from-[#4b4b4b] to-[#303030] pl-1">
        <svg viewBox="0 0 8 26" className="h-[26px] stroke-[#8c8c8c]" strokeWidth="2" strokeDasharray="2 2">
          <path d="M1 0v26M6 0v26" />
        </svg>
        <button type="button" aria-label="Close command line" className="ml-[7px]">
          <svg viewBox="0 0 12 12" className="size-3 stroke-[#d0d0d0]" strokeWidth="2.2">
            <path d="M1 1l10 10M11 1L1 11" />
          </svg>
        </button>
        <button type="button" aria-label="Customize command line" className="ml-3">
          <svg viewBox="0 0 20 20" className="size-5">
            <path d="M3 18l9-9" stroke="#c4c4c4" strokeWidth="3" strokeLinecap="round" />
            <path d="M15 1l-3 4 3 4 4-3q1 6-5 6-5 0-4-6 1-5 5-5z" fill="#c4c4c4" />
          </svg>
        </button>
      </div>
      <div className="flex flex-1 items-center bg-white/70 pl-1">
        <svg viewBox="0 0 28 20" className="w-[28px]">
          <rect x="0.5" y="2.5" width="20" height="15" fill="#f4f4f4" stroke="#888" />
          <path d="M0 2h21v4H0z" fill="#8c8c8c" />
          <path d="M2 9l3 2-3 2M7 14h5" fill="none" stroke="#888" />
          <path d="M22 8h6l-3 4z" fill="#999" />
        </svg>
        <input
          aria-label="Command"
          placeholder="Type a command"
          className="ml-3 min-w-0 flex-1 bg-transparent font-['Liberation_Mono',monospace] text-[15px] italic placeholder:text-[#b0b0b0]"
        />
        <button type="button" aria-label="Command history" className="px-[7px]">
          <Caret className="w-[9px] rotate-180 fill-black" />
        </button>
      </div>
    </form>
  )
}

function Canvas() {
  return (
    <main className="relative min-h-0 flex-1 overflow-hidden bg-black">
      <Plan />
      <div className="absolute top-[10px] right-[14px] flex items-center gap-3">
        <button aria-label="Minimize drawing">
          <svg viewBox="0 0 13 13" className="size-[13px] fill-white">
            <path d="M0 7h13v4H0z" />
          </svg>
        </button>
        <button aria-label="Restore drawing">
          <svg viewBox="0 0 13 13" className="size-[13px] fill-none stroke-white" strokeWidth="2">
            <path d="M1 5h8v7H1zM3 1h9v8" />
          </svg>
        </button>
        <button aria-label="Close drawing window">
          <svg viewBox="0 0 12 12" className="size-3 stroke-white" strokeWidth="3">
            <path d="M1 1l10 10M11 1L1 11" />
          </svg>
        </button>
      </div>
      <ViewCube />
      <NavigationBar />
      <div className="absolute right-[74px] bottom-[2px] text-[#7c7c7c]">
        <p className="text-2xl leading-8">Activate Windows</p>
        <p className="text-[17px] leading-7">Go to Settings to activate Windows.</p>
      </div>
      <CommandLine />
    </main>
  )
}

/* ---------- status bar ---------- */

function Status({ label, width, on, children }: { label: string; width: string; on?: boolean; children: ReactNode }) {
  return (
    <button
      aria-label={label}
      className={`flex h-[28px] shrink-0 items-center justify-center ${width} ${on ? 'bg-[#5b8fc4]' : ''}`}
    >
      {children}
    </button>
  )
}

function Glyph({ children }: { children: ReactNode }) {
  return (
    <svg viewBox="0 0 22 22" className="size-[22px] fill-none stroke-[#ececec]" strokeWidth="1.5">
      {children}
    </svg>
  )
}

function Divider() {
  return <span className="h-[31px] w-px shrink-0 bg-[#858585]" />
}

function Compass() {
  return <path d="M10 1l3 9 5 9-5-3-3 5-3-5-5 3 5-9z" fill="#ececec" stroke="none" />
}

function StatusBar() {
  return (
    <footer className="flex h-[36px] shrink-0 items-start border-t border-[#5a5a5a] bg-[#383838] text-sm">
      <nav className="flex pl-[16px] text-[#b8b8b8]">
        <a
          href="#"
          className="h-[22px] w-[72px] bg-linear-to-b from-[#5a5a5a] to-[#8a8a8a] text-center leading-[22px] font-bold text-white [clip-path:polygon(0_0,100%_0,92%_86%,86%_100%,14%_100%,8%_86%)]"
        >
          Model
        </a>
        <a
          href="#"
          className="h-[22px] w-[80px] bg-linear-to-b from-[#4a4a4a] to-[#5d5d5d] pl-[14px] leading-[22px] [clip-path:polygon(0_0,100%_0,94%_86%,88%_100%,10%_100%,4%_86%)]"
        >
          Layout1
        </a>
        <a
          href="#"
          className="h-[22px] w-[83px] bg-linear-to-b from-[#4a4a4a] to-[#5d5d5d] pl-[15px] leading-[22px] [clip-path:polygon(0_0,100%_0,94%_86%,88%_100%,10%_100%,4%_86%)]"
        >
          Layout2
        </a>
        <button
          aria-label="New layout"
          className="mt-px ml-1 flex h-[20px] w-[28px] items-center justify-center rounded-tl-lg rounded-br-lg bg-[#565656]"
        >
          <svg viewBox="0 0 10 10" className="size-[10px] stroke-[#ccc]" strokeWidth="2.5">
            <path d="M5 0v10M0 5h10" />
          </svg>
        </button>
      </nav>
      <div className="ml-auto flex h-[32px] items-center border border-[#858585] bg-[#525252] text-white">
        <Status label="Space" width="w-[62px]">
          MODEL
        </Status>
        <Divider />
        <Status label="Grid" width="w-[30px]" on>
          <Glyph>
            <path d="M6 1v20M11 1v20M16 1v20M1 6h20M1 11h20M1 16h20" />
          </Glyph>
        </Status>
        <Status label="Snap" width="w-[30px]">
          <Glyph>
            <path d="M4 5h16M4 11h16M4 17h16" strokeWidth="3" strokeDasharray="3 3" />
          </Glyph>
        </Status>
        <Status label="Snap options" width="w-[20px]">
          <Caret />
        </Status>
        <Divider />
        <Status label="Ortho" width="w-[30px]">
          <Glyph>
            <path d="M3 1v19h19M3 14h6v6" stroke="#bdbdbd" />
          </Glyph>
        </Status>
        <Status label="Polar" width="w-[29px]" on>
          <Glyph>
            <circle cx="10" cy="12" r="8" />
            <path d="M10 12h12M10 12l7-11" />
          </Glyph>
        </Status>
        <Status label="Polar options" width="w-[20px]">
          <Caret />
        </Status>
        <Status label="Isodraft" width="w-[30px]">
          <Glyph>
            <path d="M12 1v20" stroke="#7cbf6d" />
            <path d="M4 3l15 16" stroke="#c66a5a" />
            <path d="M10 8h4v4h-4z" fill="#525252" />
          </Glyph>
        </Status>
        <Status label="Isodraft options" width="w-[20px]">
          <Caret />
        </Status>
        <Divider />
        <Status label="Object tracking" width="w-[29px]" on>
          <Glyph>
            <path d="M17 2L3 19h18" />
            <circle cx="8" cy="13" r="1.5" fill="#fff" />
          </Glyph>
        </Status>
        <span className="w-[2px]" />
        <Status label="Object snap" width="w-[28px]" on>
          <Glyph>
            <path d="M6 4h14v17H3V8" />
            <path d="M1 1h5v5H1z" />
          </Glyph>
        </Status>
        <Status label="Snap list" width="w-[20px]">
          <Caret />
        </Status>
        <Divider />
        <Status label="Lineweight" width="w-[32px]">
          <Glyph>
            <path d="M1 4h11M1 10h11M1 17h11" strokeWidth="3" />
            <path d="M12 4h9M12 10h9M12 17h9" />
          </Glyph>
        </Status>
        <Divider />
        <Status label="Annotation visibility" width="w-[29px]" on>
          <Glyph>
            <Compass />
            <circle cx="18" cy="5" r="3" />
          </Glyph>
        </Status>
        <Status label="Auto scale" width="w-[30px]">
          <Glyph>
            <Compass />
            <path d="M19 1l-3 4h4l-3 4" />
          </Glyph>
        </Status>
        <Status label="Annotation scale" width="w-[28px]">
          <Glyph>
            <Compass />
          </Glyph>
        </Status>
        <button className="flex w-[45px] items-center justify-center gap-1">
          1:1 <Caret />
        </button>
        <Divider />
        <Status label="Workspace" width="w-[32px]">
          <Glyph>
            <circle cx="11" cy="11" r="5" strokeWidth="4" />
            <circle cx="11" cy="11" r="8.5" strokeWidth="3" strokeDasharray="3.3 3.3" />
          </Glyph>
        </Status>
        <Status label="Workspace list" width="w-[17px]">
          <Caret />
        </Status>
        <Divider />
        <Status label="Monitor" width="w-[31px]">
          <Glyph>
            <path d="M11 1v20M1 11h20" strokeWidth="2.5" />
          </Glyph>
        </Status>
        <Divider />
        <Status label="Isolate" width="w-[33px]">
          <Glyph>
            <path d="M2 2h6v7H2zM8 14l5 7H4z" />
            <circle cx="16" cy="10" r="4" />
          </Glyph>
        </Status>
        <Divider />
        <span className="w-1" />
        <Divider />
        <Status label="Clean screen" width="w-[36px]">
          <Glyph>
            <path d="M1 4h19v14H1zM5 14l4-3M12 11l4-4M4 11v4h4M13 6h4v4" />
          </Glyph>
        </Status>
        <Status label="Customization" width="w-[29px]">
          <Glyph>
            <path d="M1 3h20M1 11h20M1 19h20" strokeWidth="2" />
          </Glyph>
        </Status>
      </div>
    </footer>
  )
}

/* ---------- taskbar ---------- */

function OfficeIcon({ letter, color, tint }: { letter: string; color: string; tint: string }) {
  return (
    <svg viewBox="0 0 28 28" className="size-7">
      <path d="M1 5q0-4 4-4h22v26H1z" fill={tint} />
      <path d="M4 4h18v16H4z" fill="#fff" opacity="0.45" />
      <path d="M18 15l10 4-3 9-12-1z" fill="#fff" />
      <path d="M18 20l6 2M17 23l6 2" stroke={color} opacity="0.6" />
      <text x="12" y="21" textAnchor="middle" fontSize="21" fontWeight="800" fill={color} fontFamily="Open Sans, sans-serif">
        {letter}
      </text>
    </svg>
  )
}

const apps: { name: string; state?: 'open' | 'active'; icon: ReactNode }[] = [
  {
    name: 'Task view',
    icon: (
      <svg viewBox="0 0 22 20" className="h-5 fill-none stroke-white" strokeWidth="1.5">
        <path d="M2 5h12v10H2zM2 0v2h12V0M2 20v-2h12v2M19 0v4M19 11v9" />
        <path d="M18 6h3v3h-3z" fill="#fff" stroke="none" />
      </svg>
    ),
  },
  { name: 'Word', icon: <OfficeIcon letter="W" color="#1c5cb0" tint="#a9d1f0" /> },
  { name: 'PowerPoint', icon: <OfficeIcon letter="P" color="#d2451e" tint="#f3a574" /> },
  { name: 'Excel', icon: <OfficeIcon letter="X" color="#3a8c2c" tint="#93c98a" /> },
  {
    name: 'AutoCAD',
    state: 'active',
    icon: (
      <svg viewBox="0 0 30 30" className="size-[30px]">
        <path d="M0 0h30v30H0z" fill="#fde3df" />
        <path d="M6 23L13 4h4l7 19h-5l-1-4h-6l-2 4zM13 15h4l-2-6z" fill="#c4231c" />
        <text x="20" y="28" fontSize="6" fontWeight="700" fill="#e8402c">
          HD
        </text>
      </svg>
    ),
  },
  {
    name: 'Revit',
    state: 'open',
    icon: (
      <svg viewBox="0 0 30 30" className="size-[30px]">
        <path d="M0 0h30v30H0z" fill="#dfeaf6" />
        <path d="M8 3h8q7 0 7 6 0 5-4 6l4 10h-5l-4-9h-2v9H8zM12 7v6h4q3 0 3-3t-3-3z" fill="#275ea8" />
      </svg>
    ),
  },
  {
    name: 'Groove Music',
    icon: (
      <svg viewBox="0 0 30 30" className="size-[30px]">
        <circle cx="15" cy="15" r="13.5" fill="#2b2d31" stroke="#d98b4f" strokeWidth="2.5" />
        <path d="M15 28.5A13.5 13.5 0 0 0 28.5 15" fill="none" stroke="#8fa6d8" strokeWidth="2.5" />
        <circle cx="15" cy="15" r="6" fill="#eee" />
        <circle cx="15" cy="15" r="2" fill="#222" />
      </svg>
    ),
  },
  {
    name: 'Edge',
    state: 'open',
    icon: (
      <svg viewBox="0 0 26 28" className="h-7">
        <path
          d="M1 14Q2 1 14 1q11 1 11 12v3H9q1 6 8 6 4 0 7-2v5q-4 2-9 2-11-1-11-11 0-6 6-10-5 1-9 8zM9 12h9q0-5-4-5-5 0-5 5z"
          fill="#0f7fd8"
        />
      </svg>
    ),
  },
  {
    name: 'Store',
    icon: (
      <svg viewBox="0 0 30 30" className="size-[30px]">
        <path d="M10 9q0-8 5-8t5 8" fill="none" stroke="#eee" strokeWidth="1.5" />
        <path d="M1 8h28v20q0 1-1 1H2q-1 0-1-1z" fill="#fff" />
        <path d="M9 13h6v5H9z" fill="#e9501f" />
        <path d="M16 13h6v5h-6z" fill="#7fb820" />
        <path d="M9 19h6v5H9z" fill="#1d9fe0" />
        <path d="M16 19h6v5h-6z" fill="#f7b81a" />
      </svg>
    ),
  },
  {
    name: 'Mail',
    icon: (
      <svg viewBox="0 0 30 30" className="size-[30px]">
        <path d="M0 12L15 1l15 11v17H0z" fill="#2aa3ea" />
        <path d="M0 12L15 1l15 11z" fill="#0b5cb0" />
        <path d="M2 11h26L15 20z" fill="#f2f2f2" />
      </svg>
    ),
  },
  {
    name: 'Notepad',
    state: 'open',
    icon: (
      <svg viewBox="0 0 28 28" className="size-7">
        <path d="M9 2l17 3-5 22-19-5z" fill="#8cc7da" />
        <path d="M9 2l17 3-1 3L8 5z" fill="#d6d6d6" />
        <path d="M2 22l19 5 1-3z" fill="#e8e8e8" />
        <path d="M9 6l8 1-9 14-4-1z" fill="#b5e0ec" />
      </svg>
    ),
  },
]

function Taskbar() {
  return (
    <footer className="flex h-[50px] shrink-0 items-stretch bg-linear-to-r from-[#1a1c21] to-[#222324] text-white">
      <button aria-label="Start" className="flex w-[60px] items-center justify-center">
        <svg viewBox="0 0 20 20" className="size-5 fill-white">
          <path d="M0 3l9-1v8H0zM10 2l10-2v10H10zM0 11h9v8l-9-2zM10 11h10v9l-10-2z" />
        </svg>
      </button>
      <label className="flex w-[430px] items-center gap-4 border border-[#c4c4c4] bg-[#f3f3f3] pl-[14px]">
        <svg viewBox="0 0 20 20" className="size-5 fill-none stroke-[#222]" strokeWidth="1.5">
          <circle cx="13" cy="7" r="6" />
          <path d="M9 11l-8 8" />
        </svg>
        <input
          aria-label="Search Windows"
          placeholder="Type here to search"
          className="w-full bg-transparent text-[18px] placeholder:text-[#2c2c2c]"
        />
      </label>
      {apps.map((app) => (
        <button
          key={app.name}
          aria-label={app.name}
          className={`relative flex w-[62px] shrink-0 items-center justify-center ${app.state === 'active' ? 'bg-[#4a4c4e]' : ''}`}
        >
          {app.icon}
          {app.state && (
            <span className={`absolute bottom-0 h-[3px] bg-[#76b0e4] ${app.state === 'active' ? 'inset-x-0' : 'inset-x-[6px]'}`} />
          )}
        </button>
      ))}
      <div className="ml-auto flex items-center">
        <button aria-label="Hidden icons" className="w-[31px]">
          <svg viewBox="0 0 16 10" className="w-4 fill-none stroke-white" strokeWidth="1.5">
            <path d="M1 9l7-7 7 7" />
          </svg>
        </button>
        <button aria-label="Battery" className="w-[28px]">
          <svg viewBox="0 0 20 12" className="w-5 fill-none stroke-white">
            <path d="M1 1h16v10H1zM18 4v4" strokeWidth="1.5" />
            <path d="M3 3h7v6H3z" fill="#fff" />
          </svg>
        </button>
        <button aria-label="Volume" className="w-[40px]">
          <svg viewBox="0 0 22 18" className="w-[22px] fill-none stroke-white">
            <path d="M1 6h3l5-4v14l-5-4H1zM12 6q2 3 0 6M15 4q4 5 0 10M18 2q5 7 0 14" />
          </svg>
        </button>
        <button aria-label="Keyboard layout" className="w-[16px] font-['DejaVu_Sans',sans-serif] text-base">
          ع
        </button>
        <button className="ml-4 w-[84px] text-center text-sm leading-[22px]">
          <span className="block">8:33 PM</span>
          <span className="block">6/25/2020</span>
        </button>
        <button aria-label="Notifications" className="ml-3 w-[48px]">
          <svg viewBox="0 0 34 34" className="size-[34px]">
            <path d="M3 4h19v17h-9v4l-4-4H3z" fill="#fff" />
            <path d="M7 9h11M7 13h11M7 17h11" stroke="#222" strokeWidth="1.5" />
            <circle cx="22" cy="23" r="9.5" fill="#2c2d2e" fillOpacity="0.85" stroke="#777" />
            <text x="22" y="28" textAnchor="middle" fontSize="13" fontWeight="600" fill="#fff" fontFamily="Open Sans, sans-serif">
              4
            </text>
          </svg>
        </button>
        <span className="h-full w-[6px] border-l border-[#666]" />
      </div>
    </footer>
  )
}

function Watermark() {
  return (
    <div className="pointer-events-none absolute bottom-[14px] left-1/2 flex -translate-x-1/2 flex-col items-center text-[#c0c0c0] opacity-40">
      <p dir="rtl" className="font-['DejaVu_Sans',sans-serif] text-[65px] leading-[76px] font-bold">
        مستقل
      </p>
      <p className="font-['Roboto',sans-serif] text-[40px] leading-[48px] font-medium">mostaql.com</p>
    </div>
  )
}

export default function App() {
  return (
    <div className="relative flex h-screen flex-col overflow-hidden bg-[#b0b0b0] pt-[2px] font-['Open_Sans',sans-serif]">
      <div className="flex min-h-0 flex-1">
        <div className="flex w-[10px] shrink-0 flex-col bg-[#dedede]">
          <span className="h-[38px] bg-[#bcbcbc]" />
          <span className="h-[50px] border-b border-[#ccc] bg-[#ececec]" />
          <span className="h-[64px] bg-[#eee]" />
        </div>
        <div className="flex min-w-0 flex-1 flex-col border-r border-b border-white bg-[#383838]">
          <TitleBar />
          <MenuTabs />
          <Ribbon />
          <DocumentTabs />
          <Canvas />
          <StatusBar />
        </div>
        <div className="flex w-[9px] shrink-0 flex-col bg-[#cdcdcd]">
          <span className="h-[38px] bg-[#bcbcbc]" />
          <span className="h-[50px] border-b border-[#bbb] bg-[#dedede]" />
          <span className="h-[21px] bg-[#c4c4c4]" />
          <span className="h-[235px] bg-[#7c7c7c]" />
        </div>
      </div>
      <div className="flex h-[7px] shrink-0 overflow-hidden bg-linear-to-b from-[#c4c4c4] to-[#ebebeb]">
        <svg viewBox="0 0 300 7" className="ml-[240px] w-[300px] fill-none stroke-[#0f86dc]" strokeWidth="2.5">
          <circle cx="10" cy="-2" r="8" />
          <circle cx="284" cy="-2" r="8" />
          <path d="M20 0h256" stroke="#4aa0dc" strokeWidth="1" />
        </svg>
        <span className="mr-5 ml-auto w-[262px] bg-[#0d5cad]" />
      </div>
      <Taskbar />
      <Watermark />
    </div>
  )
}
